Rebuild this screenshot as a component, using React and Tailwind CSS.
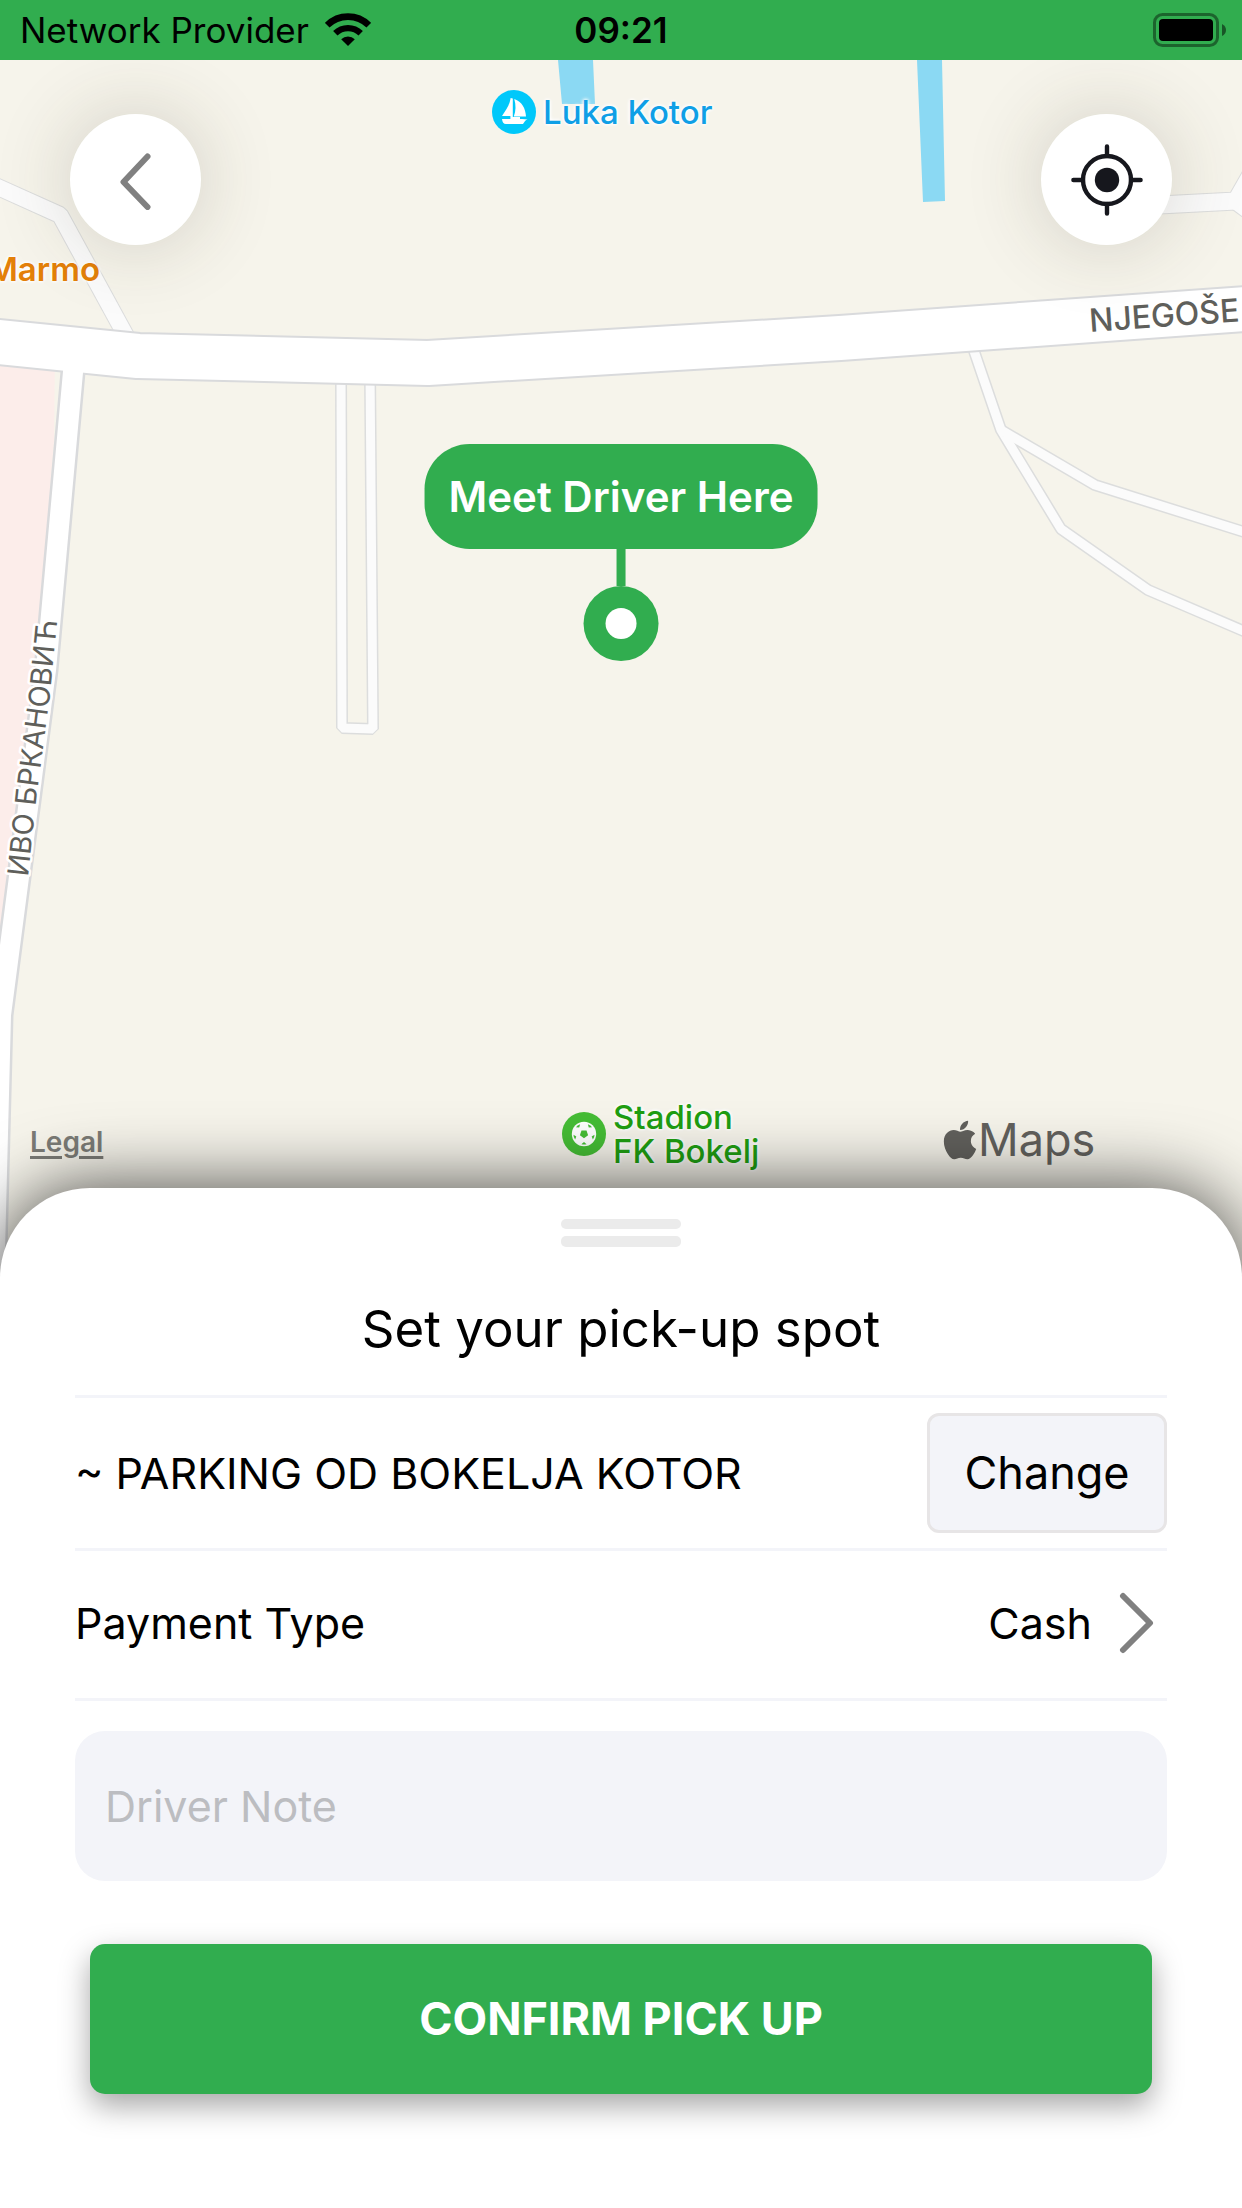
import React from "react";
import { FaApple } from "react-icons/fa";

const MINOR_ROADS = [
  "M-20 179 L60 215 L126 336",
  "M1140 206 L1236 201 L1264 152",
  "M1236 201 L1270 226",
  "M341 370 L342 728 L373 729 L370 370",
];

function MapCanvas() {
  return (
    <svg
      className="absolute inset-0 h-full w-full"
      viewBox="0 60 1242 1218"
      preserveAspectRatio="xMidYMin slice"
      aria-hidden="true"
    >
      <defs>
        <path id="street-main" d="M1090 332 L1300 317" />
        <path id="street-side" d="M28 877 L37 793 L50 695 L57 622 L60 580" />
      </defs>
      <rect x="0" y="60" width="1242" height="1218" fill="#f6f4eb" />
      <path d="M0 355 H55 L54 440 L40 620 L0 940Z" fill="#fcedea" />
      <path d="M558 60 H593 L595 104 H562Z M917 60 H942 L945 201 L923 202Z" fill="#8bd9f3" />

      {/* footpaths and service roads */}
      <g fill="none" strokeLinejoin="bevel">
        <g stroke="#dcdddd">
          <path d={MINOR_ROADS[0]} strokeWidth="18" />
          <path d={MINOR_ROADS[1]} strokeWidth="19" />
          <path d={MINOR_ROADS[2]} strokeWidth="19" />
          <path d={MINOR_ROADS[3]} strokeWidth="12" />
          <path d="M972 345 L1001 430 L1061 529 L1148 590 L1260 638" strokeWidth="12" />
          <path d="M1001 430 L1095 485 L1260 537" strokeWidth="12" />
        </g>
        <g stroke="#fbfbfb">
          <path d={MINOR_ROADS[0]} strokeWidth="16" />
          <path d={MINOR_ROADS[1]} strokeWidth="17" />
          <path d={MINOR_ROADS[2]} strokeWidth="17" />
          <path d={MINOR_ROADS[3]} strokeWidth="9" />
          <path d="M972 345 L1001 430 L1061 529 L1148 590 L1260 638" strokeWidth="9" />
          <path d="M1001 430 L1095 485 L1260 537" strokeWidth="9" />
        </g>
      </g>

      {/* main streets */}
      <g fill="none" strokeLinejoin="round">
        <g stroke="#d9dadc">
          <path d="M75 350 L46 670 L1 1015 L-6 1290" strokeWidth="25" />
          <path d="M-20 340 L138 356 L428 363 L840 338 L1260 308" strokeWidth="48" />
        </g>
        <g stroke="#ffffff">
          <path d="M75 350 L46 670 L1 1015 L-6 1290" strokeWidth="20" />
          <path d="M-20 340 L138 356 L428 363 L840 338 L1260 308" strokeWidth="44" />
        </g>
      </g>

      <g
        className="font-['Inter',sans-serif]"
        fill="#5f5f5b"
        stroke="#ffffff"
        strokeWidth="5"
        strokeLinejoin="round"
        paintOrder="stroke"
      >
        <text className="text-[32px] font-medium">
          <textPath href="#street-main">NJEGOŠE</textPath>
        </text>
        <text className="text-[29px]">
          <textPath href="#street-side">ИВО БРКАНОВИЋ</textPath>
        </text>
      </g>
    </svg>
  );
}

function WifiIcon() {
  return (
    <svg className="h-[34px] w-[46px]" viewBox="0 0 46 34" fill="none" stroke="#000" aria-label="Wi-Fi">
      <path d="M2.2 12.2 A29.4 29.4 0 0 1 43.8 12.2" strokeWidth="6.6" />
      <path d="M10.3 20.3 A18 18 0 0 1 35.7 20.3" strokeWidth="6.2" />
      <path d="M23 33 L16.2 26.2 A9.6 9.6 0 0 1 29.8 26.2Z" fill="#000" stroke="none" />
    </svg>
  );
}

function BatteryIcon() {
  return (
    <svg className="h-[34px] w-[73px]" viewBox="0 0 73 34" aria-label="Battery full">
      <rect x="1.5" y="1.5" width="63" height="31" rx="8" fill="none" stroke="#000" strokeOpacity="0.42" strokeWidth="3" />
      <rect x="6" y="6" width="54" height="22" rx="4" fill="#000" />
      <path d="M69 11 Q73 13 73 17 Q73 21 69 23Z" fill="#000" fillOpacity="0.5" />
    </svg>
  );
}

function SailboatIcon() {
  return (
    <svg className="size-11 shrink-0" viewBox="0 0 44 44" aria-hidden="true">
      <circle cx="22" cy="22" r="22" fill="#00c8fa" />
      <g fill="#fff">
        <path d="M18.6 8 L20.8 8.6 V27 H28 V29 H18.4 V26 H10 C13 21 17.5 16 18.6 8Z" />
        <path d="M22.3 9 C30 12 33.5 18 34 26.6 H21.8 C24 21 24 15 22.3 9Z" />
        <path d="M10 29 H30 L35.6 29.6 C33.5 30 32.5 32 31 34 H14 C11.5 34 10.4 32.5 10 29Z" />
      </g>
    </svg>
  );
}

const BALL_PATCH = "M19.4 11.8 L22 13.9 L24.6 11.8 Q22 11 19.4 11.8Z";

function FootballIcon() {
  return (
    <svg className="size-11 shrink-0" viewBox="0 0 44 44" aria-hidden="true">
      <circle cx="22" cy="22" r="22" fill="#45bd35" />
      <circle cx="22" cy="22" r="12.2" fill="#fff" />
      <g fill="#45bd35">
        <path d="M19.5 18.6 H24.5 L26.1 23.3 L22 26.3 L17.9 23.3Z" />
        <path d={BALL_PATCH} transform="rotate(36 22 22)" />
        <path d={BALL_PATCH} transform="rotate(108 22 22)" />
        <path d={BALL_PATCH} transform="rotate(180 22 22)" />
        <path d={BALL_PATCH} transform="rotate(252 22 22)" />
        <path d={BALL_PATCH} transform="rotate(324 22 22)" />
      </g>
    </svg>
  );
}

function RoundButton({ label, children }) {
  return (
    <button
      type="button"
      aria-label={label}
      className="grid size-[131px] place-items-center rounded-full bg-white shadow-[0_0_80px_rgba(60,55,35,0.2)]"
    >
      {children}
    </button>
  );
}

function StatusBar() {
  return (
    <header className="grid h-[60px] grid-cols-3 items-center bg-[#31ad4f] px-4 text-[35px] leading-[60px] text-black">
      <div className="flex items-center gap-4 pl-1 whitespace-nowrap">
        <span>Network Provider</span>
        <WifiIcon />
      </div>
      <time className="text-center font-semibold">09:21</time>
      <div className="flex justify-end">
        <BatteryIcon />
      </div>
    </header>
  );
}

const HALO = "[text-shadow:0_0_4px_#fff,0_0_4px_#fff,0_0_3px_#fff]";

function MapView() {
  return (
    <section aria-label="Map" className="relative min-h-[900px] flex-1 overflow-hidden">
      <MapCanvas />

      <span className={`absolute top-[187px] right-[calc(100%-100px)] text-[33px] leading-[44px] font-semibold text-[#e38009] ${HALO}`}>
        Marmo
      </span>

      <div className="absolute top-[30px] left-[492px] flex items-center gap-[7px]">
        <SailboatIcon />
        <span className={`text-[33px] leading-[44px] font-medium whitespace-nowrap text-[#0f9fe6] ${HALO}`}>Luka Kotor</span>
      </div>

      <div className="absolute top-[1040px] left-[562px] flex items-center gap-[7px]">
        <FootballIcon />
        <span className={`text-[33px] leading-[34px] font-medium whitespace-nowrap text-[#1f9e12] ${HALO}`}>
          Stadion
          <br />
          FK Bokelj
        </span>
      </div>

      <a
        href="#legal"
        className="absolute top-[1064px] left-[30px] text-[28px] leading-[36px] font-semibold text-[#7b7b76] underline decoration-3 underline-offset-4"
      >
        Legal
      </a>

      <div className="absolute top-[1052px] left-[942px] flex items-center text-[#62615d]">
        <FaApple className="h-11 w-[36px]" aria-hidden="true" />
        <span className="text-[45px] leading-[56px]">Maps</span>
      </div>

      <div className="absolute top-[384px] left-1/2 flex -translate-x-1/2 flex-col items-center">
        <div className="rounded-[45px] bg-[#31ad4f] px-6 py-[24px] text-[42px] leading-[57px] font-semibold whitespace-nowrap text-white">
          Meet Driver Here
        </div>
        <div className="h-[37px] w-[9px] bg-[#31ad4f]" />
        <div className="grid size-[75px] place-items-center rounded-full bg-[#31ad4f]">
          <div className="size-[31px] rounded-full bg-white" />
        </div>
      </div>

      <div className="relative flex justify-between px-[70px] pt-[54px]">
        <RoundButton label="Back">
          <svg className="h-[60px] w-[36px]" viewBox="0 0 36 60" fill="none" stroke="#808080" strokeWidth="6" strokeLinecap="round" strokeLinejoin="round">
            <path d="M29.5 6.5 L5.5 32 L29.5 57" />
          </svg>
        </RoundButton>
        <RoundButton label="My location">
          <svg className="size-[72px]" viewBox="0 0 72 72" fill="none" stroke="#16171d" strokeWidth="4.4" strokeLinecap="round">
            <circle cx="36" cy="36" r="24" />
            <circle cx="36" cy="36" r="12.2" fill="#16171d" stroke="none" />
            <path d="M36 2.4 V12 M36 60 V69.6 M2.4 36 H12 M60 36 H69.6" />
          </svg>
        </RoundButton>
      </div>
    </section>
  );
}

function PickupSheet() {
  return (
    <section className="relative -mt-[90px] rounded-t-[90px] bg-white px-[75px] pt-[31px] pb-[114px] text-[43px] leading-[60px] text-black shadow-[0_0_72px_rgba(0,0,0,0.72)]">
      <div className="flex flex-col items-center gap-[7px]">
        <div className="h-[10px] w-[120px] rounded-[5px] bg-[#ebebeb]" />
        <div className="h-[11px] w-[120px] rounded-[5px] bg-[#ebebeb]" />
      </div>

      <h1 className="mt-[46px] mb-[30px] text-center text-[51px] leading-[72px]">Set your pick-up spot</h1>

      <div className="flex h-[156px] items-center justify-between border-y-3 border-[#f3f4f9]">
        <span>~ PARKING OD BOKELJA KOTOR</span>
        <button
          type="button"
          className="h-[120px] w-[240px] rounded-[12px] border-3 border-[#e7e5e6] bg-[#f3f4f9] text-[45px]"
        >
          Change
        </button>
      </div>

      <button
        type="button"
        className="flex h-[150px] w-full items-center border-b-3 border-[#f3f4f9] pr-[13px] pb-[3px] text-left"
      >
        <span className="flex-1">Payment Type</span>
        <span>Cash</span>
        <svg className="ml-[26px] h-[62px] w-[36px]" viewBox="0 0 36 62" fill="none" stroke="#808080" strokeWidth="6" strokeLinecap="round" strokeLinejoin="round" aria-hidden="true">
          <path d="M5 4 L32 31 L5 58" />
        </svg>
      </button>

      <input
        type="text"
        aria-label="Driver Note"
        placeholder="Driver Note"
        className="mt-[30px] block h-[150px] w-full rounded-[30px] bg-[#f3f4f9] px-[30px] placeholder:text-[#bcbdc1]"
      />

      <div className="mt-[63px] px-[15px]">
        <button
          type="button"
          className="h-[150px] w-full rounded-[15px] bg-[#31ad4f] text-[45px] font-bold text-white shadow-[0_12px_30px_rgba(0,0,0,0.35)]"
        >
          CONFIRM PICK UP
        </button>
      </div>
    </section>
  );
}

export default function App() {
  return (
    <main className="flex min-h-screen flex-col overflow-hidden bg-white font-['Inter',sans-serif]">
      <StatusBar />
      <MapView />
      <PickupSheet />
    </main>
  );
}
